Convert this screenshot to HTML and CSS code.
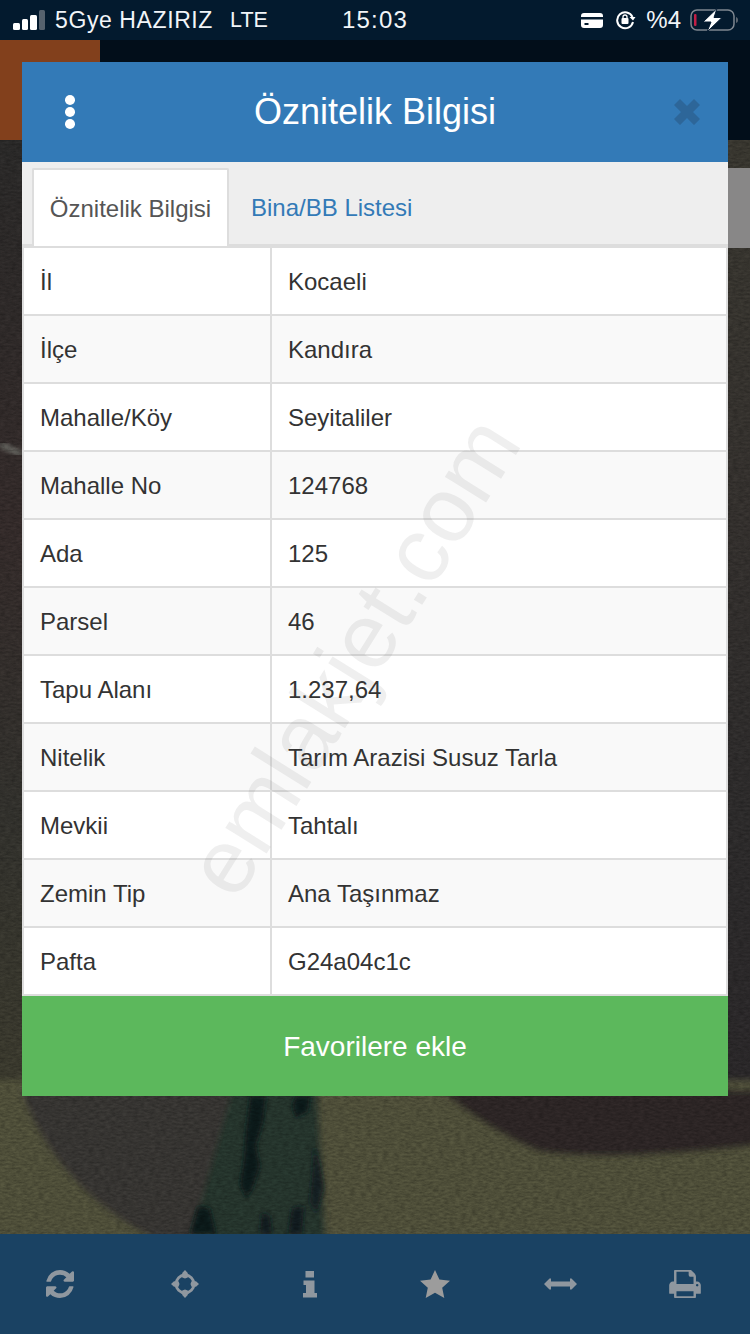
FILE: index.html
```html
<!DOCTYPE html>
<html lang="tr">
<head>
<meta charset="utf-8">
<title>Öznitelik Bilgisi</title>
<link rel="stylesheet" href="styles.css">
</head>
<body>
<div class="screen">
  <header class="status">
    <div class="status-left">
      <span class="signal"><i class="b1"></i><i class="b2"></i><i class="b3"></i><i class="b4"></i></span>
      <span class="carrier">5Gye HAZIRIZ</span>
      <span class="net">LTE</span>
    </div>
    <div class="clock">15:03</div>
    <div class="status-right">
      <svg class="ic-card" viewBox="0 0 22 15"><path fill="#fff" fill-rule="evenodd" d="M3 0h16a3 3 0 0 1 3 3v1H0V3a3 3 0 0 1 3-3zM0 6.500h22V12a3 3 0 0 1-3 3H3a3 3 0 0 1-3-3zM3.500 10v2h4v-2z"/></svg>
      <svg class="ic-lock" viewBox="0 0 22 20"><path fill="none" stroke="#fff" stroke-width="2" d="M17.500 7A8 8 0 1 0 18 12"/><path fill="#fff" d="M14.500 7h6l-2.500 3.500z"/><rect x="6.500" y="8" width="7" height="6" rx="1" fill="#fff"/><path fill="none" stroke="#fff" stroke-width="1.300" d="M8 8.500V7a2 2 0 0 1 4 0v1.500"/></svg>
      <span class="pct">%4</span>
      <svg class="ic-batt" viewBox="0 0 48 24"><rect x="1" y="2" width="43" height="20" rx="6" fill="none" stroke="#7f8790" stroke-width="1.500"/><rect x="4" y="6" width="2.500" height="12" rx="1" fill="#c21f45"/><path d="M46 9v6c1.500-.5 2-1.500 2-3s-.5-2.500-2-3z" fill="#5d6670"/><path fill="#fff" stroke="#041a30" stroke-width="1" d="M27 .5 13 14h8L17 24 32 9.500h-8z"/></svg>
    </div>
  </header>

  <main class="map">
    <svg class="map-art" viewBox="0 0 750 1194" preserveAspectRatio="none" aria-hidden="true">
      <defs>
        <filter id="grain" x="0" y="0" width="100%" height="100%">
          <feTurbulence type="fractalNoise" baseFrequency="0.18 0.5" numOctaves="3" seed="4"/>
          <feColorMatrix values="0 0 0 0 0  0 0 0 0 0  0 0 0 0 0  0 0 0 .9 -.22"/>
        </filter>
        <filter id="soft"><feGaussianBlur stdDeviation="3"/></filter>
        <filter id="softer"><feGaussianBlur stdDeviation="2.500"/></filter>
        <linearGradient id="leftStrip" x1="0" y1="0" x2="0" y2="1">
          <stop offset="0" stop-color="#2f2e2d"/><stop offset=".4" stop-color="#3a302f"/><stop offset=".7" stop-color="#383732"/><stop offset="1" stop-color="#424133"/>
        </linearGradient>
        <linearGradient id="rightStrip" x1="0" y1="0" x2="0" y2="1">
          <stop offset="0" stop-color="#3f3d35"/><stop offset=".4" stop-color="#3a3633"/><stop offset=".7" stop-color="#323030"/><stop offset="1" stop-color="#2f2c2e"/>
        </linearGradient>
      </defs>
      <rect x="0" y="100" width="40" height="960" fill="url(#leftStrip)"/>
      <rect x="700" y="100" width="50" height="960" fill="url(#rightStrip)"/>
      <g filter="url(#soft)">
        <rect x="-10" y="1040" width="770" height="170" fill="#585840"/>
        <path fill="#3d3b37" d="M21 1050C40 1110 90 1170 158 1200H260V1050z"/>
        <path fill="#302b29" d="M440 1050C470 1075 500 1095 540 1112 600 1120 680 1115 760 1105V1050z"/>
        <path fill="#2a3a33" d="M232 1050H318L326 1200H190z"/>
      </g>
      <g filter="url(#softer)" fill="#0f1a1f">
        <path d="M250 1056h16l-3 26-7 24 4 20-8 24-6 8-6-14 4-26 2-28z"/>
        <path d="M296 1056h14l-2 16-12 6-4-12z"/>
        <path d="M314 1104l6 20 4 24-8 26-6-12 2-24z" opacity=".75"/>
        <path d="M198 1166l12 2 6 26h-26z"/>
        <path d="M262 1172l8 4 2 18h-12z" opacity=".85"/>
        <path d="M292 1168l12-2-2 28h-14z" opacity=".85"/>
      </g>
      <path d="M0 404C8 408 15 412 22 414" fill="none" stroke="#7b7d76" stroke-width="5" filter="url(#softer)"/>
      <rect x="0" y="100" width="750" height="1094" filter="url(#grain)" opacity=".5"/>
      <rect x="0" y="0" width="750" height="100" fill="#020e1a"/>
      <rect x="0" y="0" width="100" height="100" fill="#82401c"/>
      <rect x="650" y="128" width="100" height="80" fill="#888787"/>
    </svg>
  </main>

  <nav class="toolbar">
    <svg viewBox="0 0 1536 1536"><path fill="#8f979f" d="M1511 928q0 5-1 7-64 268-268 434.500t-478 166.500q-146 0-282.500-55t-243.500-157l-129 129q-19 19-45 19t-45-19-19-45v-448q0-26 19-45t45-19h448q26 0 45 19t19 45-19 45l-137 137q71 66 161 102t187 36q134 0 250-65t186-179q11-17 53-117 8-23 30-23h192q13 0 22.500 9.500t9.500 22.500zm25-800v448q0 26-19 45t-45 19h-448q-26 0-45-19t-19-45 19-45l138-138q-148-137-349-137-134 0-250 65t-186 179q-11 17-53 117-8 23-30 23h-199q-13 0-22.500-9.500t-9.500-22.500v-7q65-268 270-434.500t480-166.500q146 0 284 55.500t245 156.500l130-129q19-19 45-19t45 19 19 45z"/></svg>
    <svg viewBox="0 0 28 28"><circle cx="14" cy="14" r="9" fill="none" stroke="#8f979f" stroke-width="2.800"/><path fill="#8f979f" d="M14 0l2.800 3v4.500l-2.800 1-2.800-1V3zM14 28l-2.800-3v-4.500l2.800-1 2.800 1V25zM0 14l3-2.800h4.500l1 2.800-1 2.800H3zM28 14l-3 2.800h-4.500l-1-2.800 1-2.800H25z"/></svg>
    <svg viewBox="0 0 28 28"><path fill="#8f979f" d="M9.500 1h8.500v6.500H9.500zM9 10.500h9.500V23H21v4.500H7V23h3V15H7.500v-4.500z"/></svg>
    <svg viewBox="0 0 30 28"><path fill="#9c9c9c" d="M15 0l4.400 9.400 10.600 1.300-7.800 7.100 2.100 10.200L15 22.800 5.700 28l2.100-10.200L0 10.700l10.600-1.300z"/></svg>
    <svg class="wide" viewBox="0 0 33 12"><path fill="#8f979f" d="M0 6l5.500-5.500h1.500v3h19v-3h1.500L33 6l-5.500 5.500H26v-3H7v3H5.500z"/></svg>
    <svg viewBox="0 32 1664 1472"><path fill="#8f979f" d="M384 1408h896v-256h-896v256zm0-640h896v-384h-160q-40 0-68-28t-28-68v-160h-640v640zm1152 64q0-26-19-45t-45-19-45 19-19 45 19 45 45 19 45-19 19-45zm128 0v416q0 13-9.500 22.500t-22.500 9.500h-224v160q0 40-28 68t-68 28h-960q-40 0-68-28t-28-68v-160h-224q-13 0-22.500-9.500t-9.500-22.500v-416q0-79 56.500-135.500t135.500-56.500h64v-544q0-40 28-68t68-28h672q40 0 88 20t76 48l152 152q28 28 48 76t20 88v256h64q79 0 135.500 56.500t56.500 135.500z"/></svg>
  </nav>

  <section class="modal">
    <div class="modal-head">
      <span class="dots"><i></i><i></i><i></i></span>
      <h1>Öznitelik Bilgisi</h1>
      <svg class="close" viewBox="0 0 28 28"><path fill="#2d6699" d="M7 1 14 8l7-7 6 6-7 7 7 7-6 6-7-7-7 7-6-6 7-7-7-7z"/></svg>
    </div>
    <div class="tabs">
      <div class="tab active">Öznitelik Bilgisi</div>
      <div class="tab">Bina/BB Listesi</div>
    </div>
    <div class="table">
      <div class="row"><div class="key">İl</div><div class="val">Kocaeli</div></div>
      <div class="row"><div class="key">İlçe</div><div class="val">Kandıra</div></div>
      <div class="row"><div class="key">Mahalle/Köy</div><div class="val">Seyitaliler</div></div>
      <div class="row"><div class="key">Mahalle No</div><div class="val">124768</div></div>
      <div class="row"><div class="key">Ada</div><div class="val">125</div></div>
      <div class="row"><div class="key">Parsel</div><div class="val">46</div></div>
      <div class="row"><div class="key">Tapu Alanı</div><div class="val">1.237,64</div></div>
      <div class="row"><div class="key">Nitelik</div><div class="val">Tarım Arazisi Susuz Tarla</div></div>
      <div class="row"><div class="key">Mevkii</div><div class="val">Tahtalı</div></div>
      <div class="row"><div class="key">Zemin Tip</div><div class="val">Ana Taşınmaz</div></div>
      <div class="row"><div class="key">Pafta</div><div class="val">G24a04c1c</div></div>
    </div>
    <button class="fav">Favorilere ekle</button>
    <div class="watermark">emlakjet.com</div>
  </section>
</div>
</body>
</html>
```

FILE: styles.css
```css
* { box-sizing: border-box; }
html, body { margin: 0; padding: 0; }
body { font-family: "Liberation Sans", Arial, sans-serif; background: #000; }
.screen { position: relative; width: 750px; height: 1334px; overflow: hidden; display: flex; flex-direction: column; }

.status { height: 40px; flex: none; background: #031a2e; color: #f2f5f8; display: grid; grid-template-columns: 1fr auto 1fr; align-items: center; padding: 0 13px; font-size: 23px; }
.status-left { display: flex; align-items: center; }
.signal { display: flex; align-items: flex-end; gap: 2px; height: 20px; margin-right: 10px; }
.signal i { display: block; width: 6.500px; border-radius: 1.500px; background: #fff; }
.signal .b1 { height: 7px; }
.signal .b2 { height: 11px; }
.signal .b3 { height: 15px; }
.signal .b4 { height: 20px; background: #56626e; }
.carrier { letter-spacing: .6px; }
.net { margin-left: 17px; font-size: 21.500px; }
.clock { font-size: 24px; letter-spacing: 1.200px; }
.status-right { display: flex; align-items: center; justify-content: flex-end; }
.ic-card { width: 22px; height: 15px; }
.ic-lock { width: 22px; height: 20px; margin-left: 12px; }
.pct { margin-left: 9px; font-size: 24px; }
.ic-batt { width: 48px; height: 24px; margin-left: 9px; margin-right: -1px; }

.map { flex: 1; min-height: 0; background: #2f2d2c; }
.map-art { display: block; width: 100%; height: 100%; }

.toolbar { height: 100px; flex: none; background: #1a4263; display: grid; grid-template-columns: repeat(6, 125px); place-items: center; padding-bottom: 1px; }
.toolbar svg { width: 28px; height: 28px; margin-right: 5px; }
.toolbar svg:nth-child(4) { width: 30px; }
.toolbar svg:nth-child(6) { width: 32px; }
.toolbar .wide { width: 33px; height: 12px; }

.modal { position: absolute; left: 22px; top: 62px; width: 706px; height: 1034px; display: flex; flex-direction: column; background: #fff; }
.modal-head { height: 100px; flex: none; background: #337ab7; display: grid; grid-template-columns: 96px 1fr 96px; align-items: center; color: #fff; }
.dots { display: flex; flex-direction: column; align-items: center; justify-self: center; gap: 2.500px; }
.dots i { display: block; width: 10px; height: 9.500px; border-radius: 50%; background: #fff; }
.modal-head h1 { margin: 0; font-weight: 400; font-size: 36px; text-align: center; }
.close { width: 28px; height: 28px; justify-self: center; margin-left: 13px; }

.tabs { height: 86px; flex: none; background: #eee; border-bottom: 4px solid #ddd; display: flex; padding: 6px 0 0 10px; font-size: 24px; }
.tab { height: 78px; color: #337ab7; padding: 2px 17px 0 22px; display: flex; align-items: center; }
.tab.active { width: 197px; background: #fff; color: #555; border: 2px solid #ddd; border-bottom: 0; padding: 2px 0 0; justify-content: center; border-radius: 2px 2px 0 0; }

.table { flex: none; border-left: 2px solid #ddd; border-right: 2px solid #ddd; }
.row { height: 68px; display: grid; grid-template-columns: 246px 1fr; border-bottom: 2px solid #ddd; font-size: 24px; color: #333; background: #fff; }
.row:nth-child(even) { background: #f9f9f9; }
.key, .val { display: flex; align-items: center; padding: 2px 0 0 16px; }
.val { border-left: 2px solid #ddd; }

.fav { flex: 1; border: 0; background: #5cb85c; color: #fff; font: inherit; font-size: 28px; padding: 2px 0 0; }

.watermark { position: absolute; left: 331px; top: 594px; transform: translate(-50%, -50%) rotate(-58deg); font-size: 92px; color: rgba(80, 80, 80, .09); white-space: nowrap; pointer-events: none; }
```
